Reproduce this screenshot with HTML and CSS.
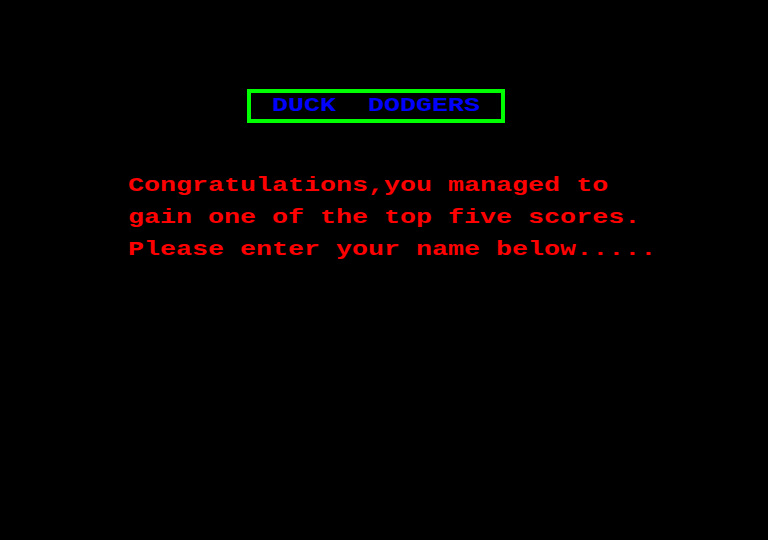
FILE: index.html
```html
<!DOCTYPE html>
<html lang="en">
<head>
<meta charset="utf-8">
<title>Duck Dodgers</title>
<link rel="stylesheet" href="styles.css">
</head>
<body>
<main class="screen">
  <div class="title-box"><span class="txt title">DUCK  DODGERS</span></div>
  <div class="message">
    <p class="line"><span class="txt">Congratulations,you managed to</span></p>
    <p class="line"><span class="txt">gain one of the top five scores.</span></p>
    <p class="line"><span class="txt">Please enter your name below.....</span></p>
  </div>
</main>
</body>
</html>
```
FILE: styles.css
```css
html, body {
  margin: 0;
  padding: 0;
  background: #000;
}
.screen {
  width: 768px;
  height: 540px;
  box-sizing: border-box;
  padding-top: 89px;
  background: #000;
  font-family: "Liberation Mono", "DejaVu Sans Mono", monospace;
  font-weight: bold;
  font-size: 21px;
  overflow: hidden;
}
.txt {
  display: inline-block;
  white-space: pre;
  transform: scaleX(1.27);
  transform-origin: left center;
}
.title-box {
  margin-left: 247px;
  width: 258px;
  height: 34px;
  box-sizing: border-box;
  border: 4px solid #00ff00;
  padding-left: 21px;
  line-height: 26px;
  color: #0000ff;
}
.message {
  margin-top: 47px;
  margin-left: 128px;
  color: #ff0000;
}
.line {
  margin: 0;
  line-height: 32px;
  height: 32px;
}
```
